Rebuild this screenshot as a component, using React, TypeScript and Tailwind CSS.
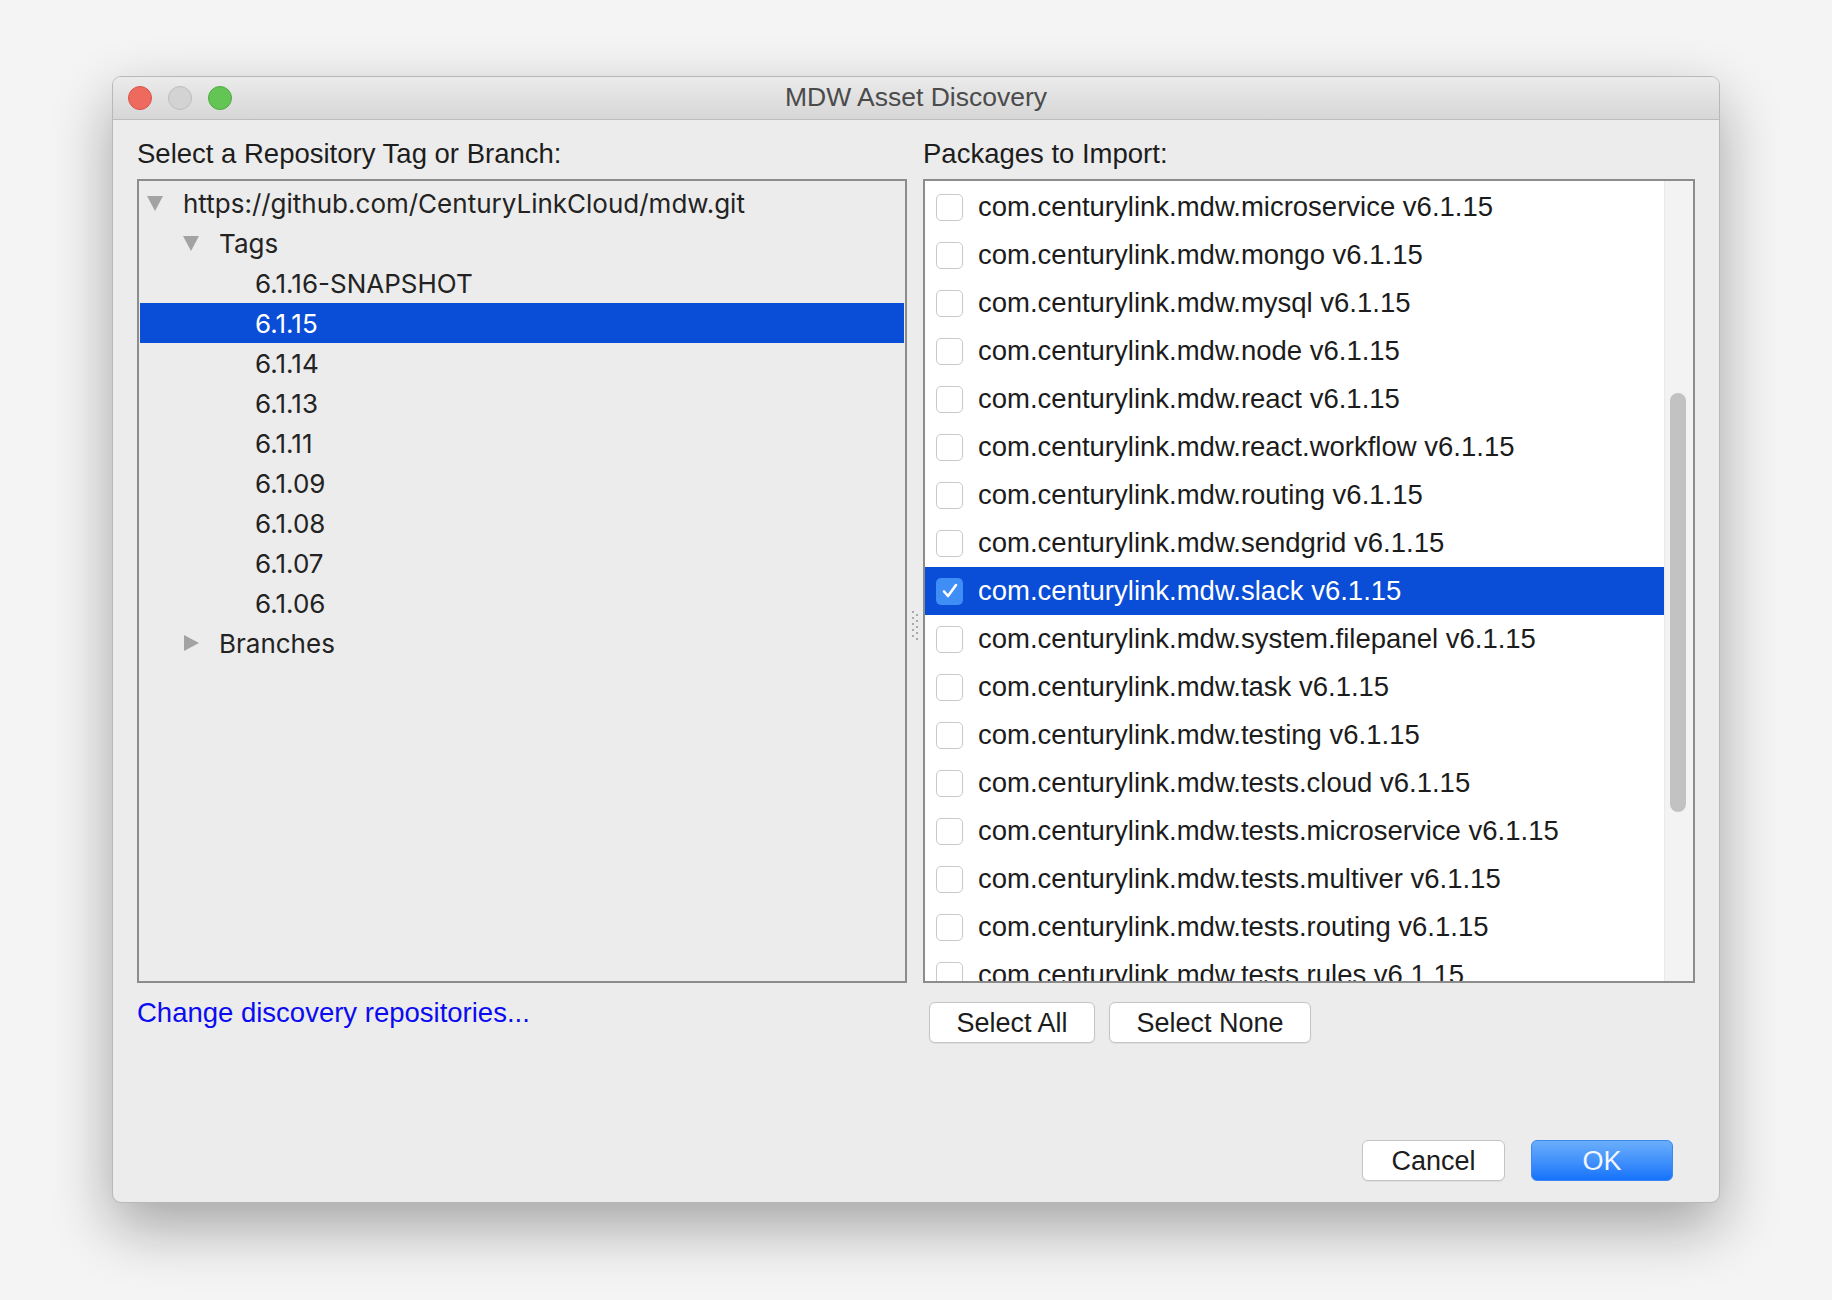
import React from "react";

const packages = [
  "microservice",
  "mongo",
  "mysql",
  "node",
  "react",
  "react.workflow",
  "routing",
  "sendgrid",
  "slack",
  "system.filepanel",
  "task",
  "testing",
  "tests.cloud",
  "tests.microservice",
  "tests.multiver",
  "tests.routing",
  "tests.rules",
];

const tags = ["6.1.16-SNAPSHOT", "6.1.15", "6.1.14", "6.1.13", "6.1.11", "6.1.09", "6.1.08", "6.1.07", "6.1.06"];

const sans = "font-['Liberation_Sans',Arial,sans-serif]";

const TriangleDown = () => (
  <svg width="16" height="15" viewBox="0 0 16 15" className="shrink-0">
    <path d="M0 0 H16 L8 15 Z" fill="#a3a3a3" />
  </svg>
);

const TriangleRight = () => (
  <svg width="15" height="16" viewBox="0 0 15 16" className="shrink-0">
    <path d="M0 0 V16 L15 8 Z" fill="#a3a3a3" />
  </svg>
);

const TrafficLight = ({ color, border }: { color: string; border: string }) => (
  <div className={`w-[24px] h-[24px] rounded-full border ${color} ${border}`} />
);

const Checkbox = ({ checked }: { checked?: boolean }) =>
  checked ? (
    <div className="w-[27px] h-[27px] rounded-[5px] bg-[#3f8ef6] flex items-center justify-center shrink-0">
      <svg width="20" height="20" viewBox="0 0 20 20">
        <path d="M4 10.5 L8 15 L16 4" fill="none" stroke="white" strokeWidth="2.6" strokeLinecap="round" strokeLinejoin="round" />
      </svg>
    </div>
  ) : (
    <div className="w-[27px] h-[27px] rounded-[5px] bg-white border border-[#c9c9c9] shrink-0" />
  );

const Splitter = () => (
  <svg width="8" height="30" viewBox="0 0 8 30">
    {[0, 1, 2, 3, 4].map((i) => (
      <g key={i} fill="#a9a9a9">
        <rect x="1" y={1 + i * 6} width="2" height="2" />
        <rect x="5" y={4 + i * 6} width="2" height="2" />
      </g>
    ))}
  </svg>
);

export default function App() {
  return (
    <div className={`w-[1832px] h-[1300px] bg-[#f4f4f4] pt-[76px] pl-[112px] ${sans}`}>
      <div className="w-[1608px] h-[1127px] rounded-[9px] bg-[#ececec] border border-[#b8b8b8] shadow-[0_24px_60px_rgba(0,0,0,0.33)] overflow-hidden flex flex-col">
        {/* title bar */}
        <div className="h-[43px] shrink-0 relative flex items-center bg-gradient-to-b from-[#ebebeb] to-[#d6d6d6] border-b border-[#bdbdbd]">
          <div className="flex gap-[16px] pl-[15px]">
            <TrafficLight color="bg-[#ee6a5f]" border="border-[#d6544a]" />
            <TrafficLight color="bg-[#d3d3d3]" border="border-[#bdbdbd]" />
            <TrafficLight color="bg-[#62c554]" border="border-[#4fab41]" />
          </div>
          <div className="absolute inset-0 flex items-center justify-center text-[26.5px] text-[#4b4b4b]">
            MDW Asset Discovery
          </div>
        </div>

        {/* body */}
        <div className="flex-1 flex flex-col pl-[24px] pr-[24px] pt-[18px] pb-[21px]">
          <div className="flex">
            {/* left column */}
            <div className="w-[770px] flex flex-col">
              <div className="h-[32px] leading-[32px] text-[27.5px] text-[#1d1d1d] mb-[9px]">
                Select a Repository Tag or Branch:
              </div>
              <div className="h-[804px] border-2 border-[#8c8c8c] bg-[#ececec] pt-[2px] px-[1px] font-['Inter',sans-serif] text-[26px] text-[#232323] overflow-hidden">
                <div className="h-[40px] flex items-center pl-[7px] gap-[20px]">
                  <TriangleDown />
                  <span>https://github.com/CenturyLinkCloud/mdw.git</span>
                </div>
                <div className="h-[40px] flex items-center pl-[43px] gap-[20px]">
                  <TriangleDown />
                  <span>Tags</span>
                </div>
                {tags.map((t) => (
                  <div
                    key={t}
                    className={`h-[40px] flex items-center pl-[115px] ${t === "6.1.15" ? "bg-[#0a4dd6] text-white" : ""}`}
                  >
                    {t}
                  </div>
                ))}
                <div className="h-[40px] flex items-center pl-[44px] gap-[20px]">
                  <TriangleRight />
                  <span>Branches</span>
                </div>
              </div>
              <div className="mt-[14px] leading-[32px] text-[27.5px] text-[#0b0bf0]">Change discovery repositories...</div>
            </div>

            {/* splitter */}
            <div className="w-[16px] flex justify-center pt-[472px]">
              <div>
                <Splitter />
              </div>
            </div>

            {/* right column */}
            <div className="w-[772px] flex flex-col">
              <div className="h-[32px] leading-[32px] text-[27.5px] text-[#1d1d1d] mb-[9px]">Packages to Import:</div>
              <div className="h-[804px] border-2 border-[#8c8c8c] bg-white flex overflow-hidden">
                <div className="flex-1 overflow-hidden pt-[2px]">
                  {packages.map((p) => {
                    const sel = p === "slack";
                    return (
                      <div
                        key={p}
                        className={`h-[48px] flex items-center pl-[11px] gap-[15px] text-[27.5px] whitespace-nowrap ${
                          sel ? "bg-[#0a4dd6] text-white" : "text-[#1c1c1c]"
                        }`}
                      >
                        <Checkbox checked={sel} />
                        <span>com.centurylink.mdw.{p} v6.1.15</span>
                      </div>
                    );
                  })}
                </div>
                <div className="w-[29px] shrink-0 bg-[#f3f3f3] border-l border-[#e9e9e9] pt-[212px] pl-[5px]">
                  <div className="w-[16px] h-[419px] rounded-full bg-[#c2c2c2]" />
                </div>
              </div>
              <div className="mt-[19px] flex gap-[14px] pl-[6px]">
                <button className="w-[166px] h-[41px] rounded-[6px] bg-white border border-[#c4c4c4] text-[27px] text-[#1c1c1c] shadow-[0_1px_1px_rgba(0,0,0,0.06)]">
                  Select All
                </button>
                <button className="w-[202px] h-[41px] rounded-[6px] bg-white border border-[#c4c4c4] text-[27px] text-[#1c1c1c] shadow-[0_1px_1px_rgba(0,0,0,0.06)]">
                  Select None
                </button>
              </div>
            </div>
          </div>

          <div className="flex-1" />

          {/* footer buttons */}
          <div className="flex justify-end gap-[26px] pr-[22px]">
            <button className="w-[143px] h-[41px] rounded-[6px] bg-white border border-[#c4c4c4] text-[27px] text-[#1c1c1c] shadow-[0_1px_1px_rgba(0,0,0,0.06)]">
              Cancel
            </button>
            <button className="w-[142px] h-[41px] rounded-[6px] bg-gradient-to-b from-[#6aaefb] to-[#1272fa] border border-[#3c87f2] text-[27px] text-[#f2f6ff]">
              OK
            </button>
          </div>
        </div>
      </div>
    </div>
  );
}
